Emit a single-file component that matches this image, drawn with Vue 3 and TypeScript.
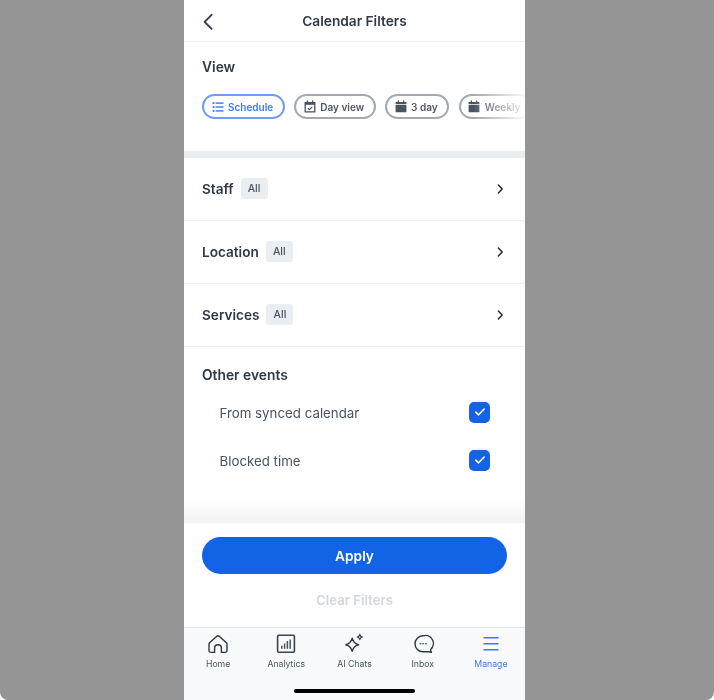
<script setup lang="ts">
interface Row { label: string }
const rows: Row[] = [{ label: 'Staff' }, { label: 'Location' }, { label: 'Services' }]
const checks: string[] = ['From synced calendar', 'Blocked time']
</script>

<template>
  <div class="stage">
    <main class="phone">
      <header class="topbar">
        <svg class="back" width="12" height="18" viewBox="0 0 12 18" fill="none"><path d="M9.6 1.8 2.6 8.8l7 7" stroke="#2f3a47" stroke-width="1.9" stroke-linecap="round" stroke-linejoin="round"/></svg>
        <h1>Calendar Filters</h1>
      </header>

      <section class="view">
        <h2>View</h2>
        <div class="chips">
          <span class="chip active">
            <svg width="12" height="12" viewBox="0 0 12 12" fill="#3b78f0"><rect x="0.6" y="1.2" width="1.9" height="1.8"/><rect x="0.6" y="5.1" width="1.9" height="1.8"/><rect x="0.6" y="9" width="1.9" height="1.8"/><rect x="3.6" y="1.4" width="8" height="1.4"/><rect x="3.6" y="5.3" width="8" height="1.4"/><rect x="3.6" y="9.2" width="8" height="1.4"/></svg>
            Schedule
          </span>
          <span class="chip">
            <svg width="12" height="13" viewBox="0 0 12 13" fill="none"><path d="M1.2 2.6h9.6v9.2H1.2z" stroke="#4a5360" stroke-width="1.3"/><path d="M1 2h10v2.8H1z" fill="#4a5360"/><path d="M3.3.6v2M8.7.6v2" stroke="#4a5360" stroke-width="1.3"/><path d="m3.9 8.1 1.5 1.5 2.8-2.8" stroke="#4a5360" stroke-width="1.1"/></svg>
            Day view
          </span>
          <span class="chip">
            <svg width="12" height="13" viewBox="0 0 12 13" fill="#4a5360"><path d="M.6 2h10.8v2.2H.6zM.6 5h10.8v7.2H.6z"/><path d="M2.7.5H4v2.2H2.7zM8 .5h1.3v2.2H8z"/></svg>
            3 day
          </span>
          <span class="chip">
            <svg width="12" height="13" viewBox="0 0 12 13" fill="#4a5360"><path d="M.6 2h10.8v2.2H.6zM.6 5h10.8v7.2H.6z"/><path d="M2.7.5H4v2.2H2.7zM8 .5h1.3v2.2H8z"/></svg>
            Weekly
          </span>
          <div class="fade"></div>
        </div>
      </section>

      <div class="band"></div>

      <div v-for="row in rows" :key="row.label" class="row">
        <span class="row-label">{{ row.label }}</span>
        <span class="tag">All</span>
        <svg class="chev" width="8" height="12" viewBox="0 0 8 12" fill="none"><path d="M2.4 2 6.2 6l-3.8 4" stroke="#20303c" stroke-width="1.6" stroke-linecap="round" stroke-linejoin="round"/></svg>
      </div>

      <section class="other">
        <h3>Other events</h3>
        <div v-for="c in checks" :key="c" class="check-row">
          <span>{{ c }}</span>
          <span class="box">
            <svg width="12" height="10" viewBox="0 0 12 10" fill="none"><path d="m1.8 5.2 2.8 2.6 5.6-5.8" stroke="#fff" stroke-width="1.6" stroke-linecap="round" stroke-linejoin="round"/></svg>
          </span>
        </div>
      </section>

      <div class="spacer"></div>

      <section class="actions">
        <button class="apply" type="button">Apply</button>
        <button class="clear" type="button">Clear Filters</button>
      </section>

      <nav class="tabs">
        <div class="tab">
          <svg width="22" height="22" viewBox="0 0 22 22" fill="none"><path d="M2.6 9.8 9.5 3.4a2.2 2.2 0 0 1 3 0l6.9 6.4a2 2 0 0 1 .6 1.4v6.4a1.8 1.8 0 0 1-1.8 1.8h-3.8v-4.2a3.4 3.4 0 0 0-6.8 0v4.200H3.800A1.800 1.800 0 0 1 2 17.600v-6.400a2 2 0 0 1 .6-1.400z" stroke="#2b3642" stroke-width="1.4" stroke-linejoin="round"/></svg>
          <span>Home</span>
        </div>
        <div class="tab">
          <svg width="22" height="22" viewBox="0 0 22 22" fill="none"><rect x="2.6" y="2.2" width="16.8" height="17" rx="1.2" stroke="#3a4451" stroke-width="1.6"/><path d="M6.8 15.8v-3M9.6 15.8v-5.4M12.4 15.8V8M15.2 15.8V6.4" stroke="#4a5360" stroke-width="1.5"/></svg>
          <span>Analytics</span>
        </div>
        <div class="tab">
          <svg width="22" height="22" viewBox="0 0 22 22" fill="none"><path d="M9.2 5.2c1 3.900 2.700 5.700 6.400 6.600-3.700.9-5.400 2.700-6.400 6.600-1-3.900-2.700-5.700-6.400-6.600 3.700-.9 5.400-2.700 6.400-6.600z" stroke="#2b3642" stroke-width="1.4" stroke-linejoin="round"/><path d="M16.8 1.4c.3 1.600 1 2.300 2.600 2.600-1.600.3-2.300 1-2.600 2.600-.3-1.600-1-2.300-2.600-2.600 1.600-.3 2.300-1 2.600-2.600z" stroke="#2b3642" stroke-width="1.1" stroke-linejoin="round"/></svg>
          <span>AI Chats</span>
        </div>
        <div class="tab">
          <svg width="22" height="22" viewBox="0 0 22 22" fill="none"><path d="M11 2.800a8 8 0 1 0 0 16h5.800c.9 0 2.200.5 2.600.6-.5-1-.9-2.100-.7-3A8 8 0 0 0 11 2.800z" stroke="#2b3642" stroke-width="1.4" stroke-linejoin="round"/><path d="M8 10.800h1M10.700 10.800h1M13.400 10.800h1" stroke="#2b3642" stroke-width="1.1" stroke-linecap="round"/></svg>
          <span>Inbox</span>
        </div>
        <div class="tab current">
          <svg width="22" height="22" viewBox="0 0 22 22" fill="none"><path d="M3.500 4.800h15M3.500 10.800h15M3.500 16.800h15" stroke="#3b78f0" stroke-width="1.5"/></svg>
          <span>Manage</span>
        </div>
        <div class="home-bar"></div>
      </nav>
    </main>
  </div>
</template>

<style scoped>
.stage {
  width: 714px;
  height: 700px;
  box-sizing: border-box;
  padding-left: 184px;
  background: #959595;
  border-radius: 0 0 8px 8px;
  display: flex;
  overflow: hidden;
  font-family: "Inter", "Open Sans", sans-serif;
  color: #2f3a47;
}
.phone {
  width: 341px;
  height: 700px;
  background: #fff;
  display: flex;
  flex-direction: column;
  filter: blur(0.35px);
}
.topbar {
  position: relative;
  height: 42px;
  box-sizing: border-box;
  border-bottom: 1px solid #eef0f3;
  display: flex;
  align-items: center;
  justify-content: center;
}
.back { position: absolute; left: 18px; top: 13px; }
h1 { margin: 0; font-size: 13.7px; font-weight: 600; }
.view {
  height: 109px;
  box-sizing: border-box;
  padding: 17px 0 0 18px;
  overflow: hidden;
}
h2 { margin: 0; font-size: 13.8px; line-height: 17px; font-weight: 600; }
.chips {
  position: relative;
  display: flex;
  gap: 9.5px;
  margin-top: 18px;
  width: 323px;
  overflow: hidden;
}
.chip {
  flex: none;
  height: 25px;
  box-sizing: border-box;
  padding: 0 9.5px 0 7.5px;
  display: flex;
  align-items: center;
  gap: 4.5px;
  border: 2px solid #a3a9b0;
  border-radius: 13px;
  font-size: 10px;
  font-weight: 600;
  color: #4f5763;
}
.chip.active { border-color: #6f9bf4; color: #3b78f0; }
.fade {
  position: absolute;
  right: 0;
  top: 0;
  bottom: 0;
  width: 52px;
  background: linear-gradient(to right, rgba(255,255,255,0), rgba(255,255,255,.92));
}
.band { height: 7px; background: #e9edf1; }
.row {
  height: 63px;
  box-sizing: border-box;
  padding: 0 21px 1px 18px;
  display: flex;
  align-items: center;
  border-bottom: 1px solid #edeff2;
}
.row-label { font-size: 13.6px; font-weight: 600; }
.tag {
  margin-left: 7px;
  width: 27px;
  height: 21px;
  line-height: 21px;
  text-align: center;
  background: #eaeef2;
  border-radius: 3px;
  font-size: 10.5px;
  font-weight: 500;
  color: #4a5360;
}
.chev { margin-left: auto; }
.other { padding: 20px 35px 0 18px; }
h3 { margin: 0; font-size: 13.8px; line-height: 17px; font-weight: 600; }
.check-row {
  height: 48px;
  padding-left: 17.5px;
  display: flex;
  align-items: center;
  justify-content: space-between;
  font-size: 13.3px;
  color: #4a5360;
}
.check-row:first-of-type { margin-top: 5px; }
.box {
  width: 21px;
  height: 21px;
  margin-bottom: 2px;
  border-radius: 5px;
  background: #1263e6;
  display: flex;
  align-items: center;
  justify-content: center;
}
.spacer { flex: 1; }
.actions {
  position: relative;
  height: 104px;
  box-sizing: border-box;
  padding: 14px 18px 0;
  display: flex;
  flex-direction: column;
  align-items: center;
  background: #fff;
}
.actions::before {
  content: "";
  position: absolute;
  left: 0;
  right: 0;
  top: -24px;
  height: 24px;
  background: linear-gradient(to bottom, rgba(226,228,231,0), rgba(226,228,231,.5));
}
.apply {
  width: 100%;
  height: 37px;
  flex: none;
  border: 0;
  border-radius: 19px;
  background: #1263e6;
  color: #fff;
  font: 600 13.7px "Inter", sans-serif;
}
.clear {
  margin-top: 18px;
  border: 0;
  padding: 0;
  background: none;
  color: #d3d6da;
  font: 600 13.2px "Inter", sans-serif;
}
.tabs {
  position: relative;
  height: 73px;
  box-sizing: border-box;
  background: #f8f9fb;
  border-top: 1px solid #dfe2e6;
  display: grid;
  grid-template-columns: repeat(5, 1fr);
  padding: 5px 0 0;
  align-items: start;
}
.tab {
  display: flex;
  flex-direction: column;
  align-items: center;
  gap: 3px;
  font-size: 8.7px;
  line-height: 12px;
  color: #4a5360;
}
.tab.current { color: #3b78f0; }
.home-bar {
  position: absolute;
  left: 110px;
  bottom: 7px;
  width: 121px;
  height: 4px;
  border-radius: 2px;
  background: #000;
}
</style>
<style>
html, body { background: #fff; }
</style>
